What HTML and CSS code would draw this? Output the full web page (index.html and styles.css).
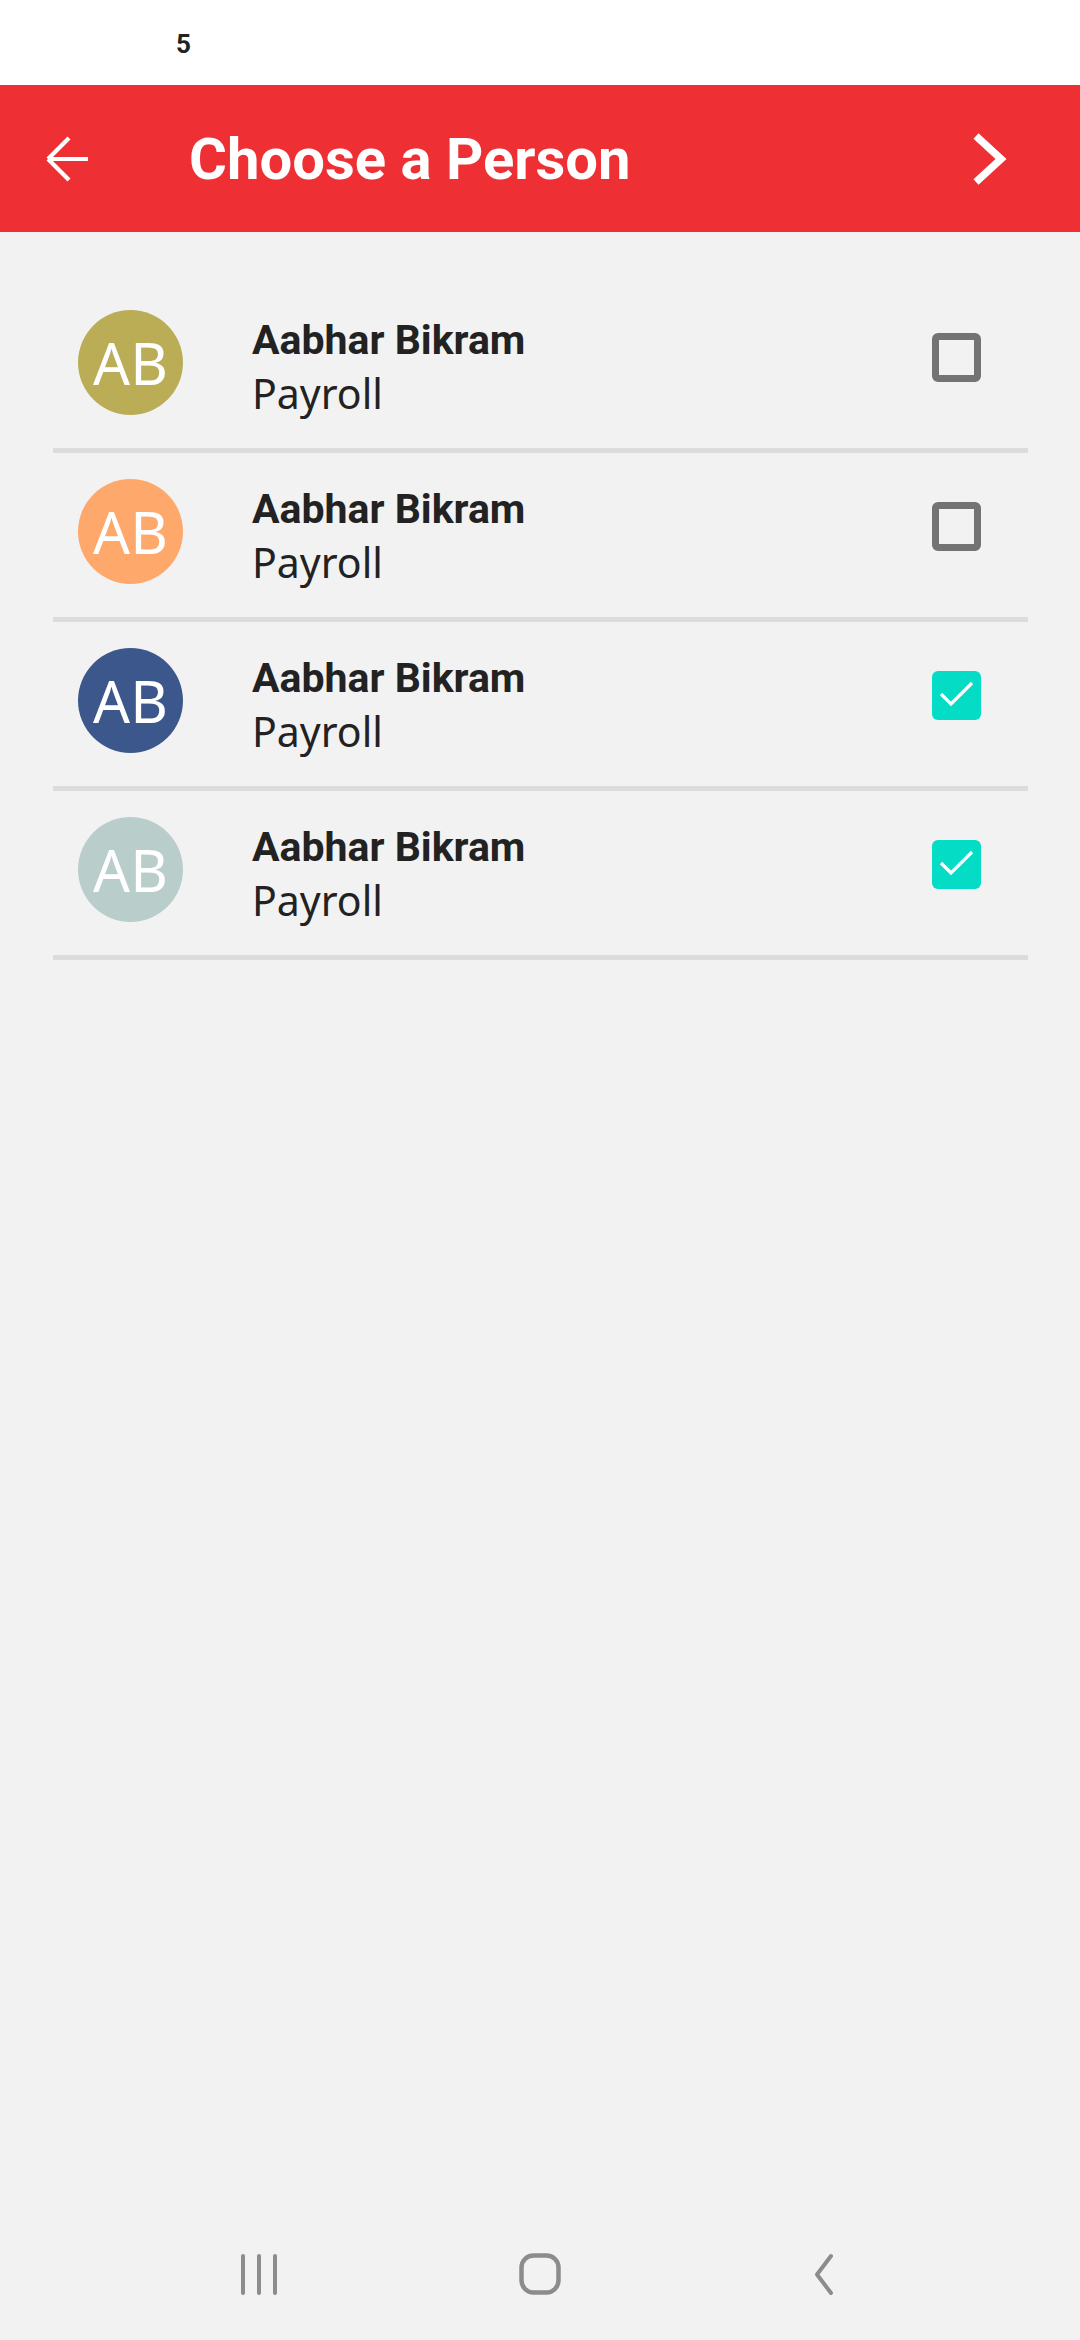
FILE: index.html
```html
<!DOCTYPE html>
<html lang="en">
<head>
<meta charset="utf-8">
<title>Choose a Person</title>
<link rel="stylesheet" href="styles.css">
</head>
<body>
<div class="screen">
  <div class="status-bar"><span class="status-time">5</span></div>
  <header class="app-bar">
    <svg class="back-icon" width="50" height="50" viewBox="0 0 50 50"><path d="M46 25H6M6 25L27 4M6 25L27 46" fill="none" stroke="#fff" stroke-width="4.2" stroke-linecap="butt"/></svg>
    <h1 class="title">Choose a Person</h1>
    <svg class="next-icon" width="40" height="56" viewBox="0 0 40 56"><path d="M6 5L31 28L6 51" fill="none" stroke="#fff" stroke-width="7.5" stroke-linejoin="miter"/></svg>
  </header>
  <main class="list">
    <div class="row">
      <div class="avatar olive">AB</div>
      <div class="info"><div class="name">Aabhar Bikram</div><div class="dept">Payroll</div></div>
      <div class="checkbox"></div>
    </div>
    <div class="row">
      <div class="avatar orange">AB</div>
      <div class="info"><div class="name">Aabhar Bikram</div><div class="dept">Payroll</div></div>
      <div class="checkbox"></div>
    </div>
    <div class="row">
      <div class="avatar navy">AB</div>
      <div class="info"><div class="name">Aabhar Bikram</div><div class="dept">Payroll</div></div>
      <div class="checkbox checked"><svg width="49" height="49" viewBox="0 0 49 49"><path d="M9 23L19 33L40 12" fill="none" stroke="#fff" stroke-width="3.2"/></svg></div>
    </div>
    <div class="row">
      <div class="avatar sage">AB</div>
      <div class="info"><div class="name">Aabhar Bikram</div><div class="dept">Payroll</div></div>
      <div class="checkbox checked"><svg width="49" height="49" viewBox="0 0 49 49"><path d="M9 23L19 33L40 12" fill="none" stroke="#fff" stroke-width="3.2"/></svg></div>
    </div>
  </main>
  <nav class="nav-bar">
    <div class="nav-slot"><svg width="44" height="44" viewBox="0 0 44 44"><path d="M6 4V41M22 4V41M38 4V41" stroke="#8c8c8c" stroke-width="4" stroke-linecap="round"/></svg></div>
    <div class="nav-slot"><svg width="46" height="46" viewBox="0 0 46 46"><rect x="4.5" y="4.5" width="37" height="37" rx="12" fill="none" stroke="#8c8c8c" stroke-width="4.5"/></svg></div>
    <div class="nav-slot"><svg width="44" height="44" viewBox="0 0 44 44"><path d="M32 4L18 22.5L32 41" fill="none" stroke="#8c8c8c" stroke-width="4" stroke-linecap="round" stroke-linejoin="round"/></svg></div>
  </nav>
</div>
</body>
</html>
```
FILE: styles.css
```css
* { box-sizing: border-box; }
html, body { margin: 0; padding: 0; }
body { background: #f2f2f2; font-family: Roboto, "Noto Sans", sans-serif; }
.screen { width: 1080px; height: 2340px; display: flex; flex-direction: column; }

.status-bar { height: 85px; background: #fff; padding-left: 176px; padding-top: 31px; }
.status-time { font-family: Roboto, sans-serif; font-weight: 700; font-size: 26px; line-height: 26px; color: #222; display: block; }

.app-bar { height: 147px; background: #ee2f33; display: flex; align-items: center; }
.back-icon { margin-left: 42px; flex: none; }
.title { margin: 0 0 0 97px; flex: 1; color: #fff; font-family: Roboto, sans-serif; font-weight: 700; font-size: 58px; line-height: 60px; }
.next-icon { margin-right: 70px; flex: none; }

.list { flex: 1; padding: 52px 52px 0 53px; }
.row { display: flex; align-items: flex-start; height: 169px; padding: 26px 47px 0 25px; border-bottom: 5px solid #dcdcdc; }
.avatar { width: 105px; height: 105px; border-radius: 50%; flex: none; display: flex; align-items: center; justify-content: center; color: #fff; font-family: "Noto Sans", "Open Sans", sans-serif; font-size: 58px; line-height: 1; }
.olive { background: #baad55; }
.orange { background: #fea86b; }
.navy { background: #3b578b; }
.sage { background: #b9cdcb; }

.info { flex: 1; margin-left: 69px; margin-top: 6px; }
.name { font-family: Roboto, sans-serif; font-weight: 700; font-size: 41px; line-height: 48px; color: #222; }
.dept { font-family: "Noto Sans", "Open Sans", sans-serif; font-size: 41px; line-height: 50px; color: #222; margin-top: 4px; }

.checkbox { width: 49px; height: 49px; margin-top: 23px; border: 7px solid #737373; border-radius: 6px; flex: none; }
.checkbox.checked { border: none; background: #04dcc5; }
.checkbox svg { display: block; }

.nav-bar { height: 132px; display: flex; justify-content: center; align-items: center; }
.nav-slot { width: 281px; display: flex; justify-content: center; align-items: center; }
.nav-slot svg { display: block; }
```
